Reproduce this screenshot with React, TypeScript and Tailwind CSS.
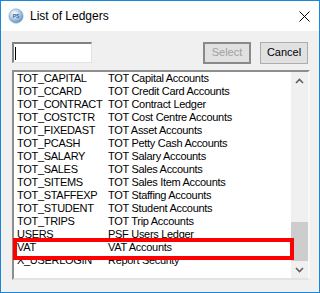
import React from 'react'

const LEDGERS: { code: string; name: string }[] = [
  { code: 'TOT_CAPITAL', name: 'TOT Capital Accounts' },
  { code: 'TOT_CCARD', name: 'TOT Credit Card Accounts' },
  { code: 'TOT_CONTRACT', name: 'TOT Contract Ledger' },
  { code: 'TOT_COSTCTR', name: 'TOT Cost Centre Accounts' },
  { code: 'TOT_FIXEDAST', name: 'TOT Asset Accounts' },
  { code: 'TOT_PCASH', name: 'TOT Petty Cash Accounts' },
  { code: 'TOT_SALARY', name: 'TOT Salary Accounts' },
  { code: 'TOT_SALES', name: 'TOT Sales Accounts' },
  { code: 'TOT_SITEMS', name: 'TOT Sales Item Accounts' },
  { code: 'TOT_STAFFEXP', name: 'TOT Staffing Accounts' },
  { code: 'TOT_STUDENT', name: 'TOT Student Accounts' },
  { code: 'TOT_TRIPS', name: 'TOT Trip Accounts' },
  { code: 'USERS', name: 'PSF Users Ledger' },
  { code: 'VAT', name: 'VAT Accounts' },
  { code: 'X_USERLOGIN', name: 'Report Security' },
]

function AppIcon() {
  return (
    <svg width="16" height="16" viewBox="0 0 16 16">
      <defs>
        <radialGradient id="ps" cx="40%" cy="35%" r="65%">
          <stop offset="0%" stopColor="#ffffff" />
          <stop offset="50%" stopColor="#b4d3ee" />
          <stop offset="100%" stopColor="#5f94c4" />
        </radialGradient>
      </defs>
      <circle cx="8" cy="8" r="7.2" fill="url(#ps)" stroke="#88aed0" strokeWidth="0.6" />
      <text x="8" y="9.8" textAnchor="middle" fontSize="5" fontFamily="Liberation Sans, sans-serif" fontWeight="bold" fill="#4a5a78">
        PS
      </text>
    </svg>
  )
}

function Chevron({ up }: { up?: boolean }) {
  return (
    <svg width="9" height="6" viewBox="0 0 9 6">
      <path d={up ? 'M1 5 L4.5 1.5 L8 5' : 'M1 1 L4.5 4.5 L8 1'} fill="none" stroke="#606060" strokeWidth="1.6" />
    </svg>
  )
}

export default function App() {
  return (
    <div
      className="w-[320px] h-[293px] flex flex-col border border-[#1c87d9] bg-[#f0f0f0] overflow-hidden"
      style={{ fontFamily: '"Liberation Sans", Arial, sans-serif' }}
    >
      {/* Title bar */}
      <div className="h-[30px] bg-white flex items-center pl-[7px] pr-[9px] shrink-0">
        <AppIcon />
        <span className="ml-[6px] text-[12px] text-black leading-none">List of Ledgers</span>
        <svg className="ml-auto" width="11" height="11" viewBox="0 0 11 11">
          <path d="M0.5 0.5 L10.5 10.5 M10.5 0.5 L0.5 10.5" stroke="#000" strokeWidth="1" />
        </svg>
      </div>

      {/* Client */}
      <div className="flex-1 flex flex-col pt-[11px] pl-[11px] pr-[9px] pb-[12px]">
        <div className="flex items-center h-[21px] pr-[2px]">
          <div className="w-[80px] h-[21px] bg-white border-t-2 border-l-2 border-t-[#838383] border-l-[#838383] border-b border-r border-b-[#e3e3e3] border-r-[#e3e3e3] flex items-center pl-[1px]">
            <div className="w-px h-[13px] bg-black" />
          </div>
          <button className="ml-auto w-[48px] h-[22px] bg-[#e1e1e1] border-2 border-[#8a8a8a] text-[11px] text-[#a0a0a0] leading-none">
            Select
          </button>
          <button className="ml-[9px] w-[48px] h-[22px] bg-[#e1e1e1] border border-[#adadad] text-[11px] text-black leading-none">
            Cancel
          </button>
        </div>

        {/* List box */}
        <div className="relative mt-[7px] flex-1 bg-white border-t-2 border-l-2 border-t-[#8e8e8e] border-l-[#8e8e8e] border-b-2 border-r-2 border-b-[#e3e3e3] border-r-[#f8f8f8] flex">
          <div className="flex-1 overflow-hidden text-[11px] leading-[13px] tracking-[-0.3px] text-black">
            {LEDGERS.map((l) => (
              <div key={l.code} className="flex h-[13px] whitespace-nowrap">
                <span className="w-[94px] pl-[3px] shrink-0">{l.code}</span>
                <span>{l.name}</span>
              </div>
            ))}
          </div>
          {/* Scrollbar */}
          <div className="w-[17px] flex flex-col bg-[#f0f0f0]">
            <div className="h-[17px] flex items-center justify-center">
              <Chevron up />
            </div>
            <div className="flex-1 flex flex-col justify-end">
              <div className="h-[39px] bg-[#cdcdcd]" />
            </div>
            <div className="h-[17px] flex items-center justify-center">
              <Chevron />
            </div>
          </div>
          {/* highlight annotation */}
          <div className="absolute left-[-1px] top-[166px] w-[281px] h-[22px] border-4 border-[#ff0000]" />
        </div>
      </div>
    </div>
  )
}
